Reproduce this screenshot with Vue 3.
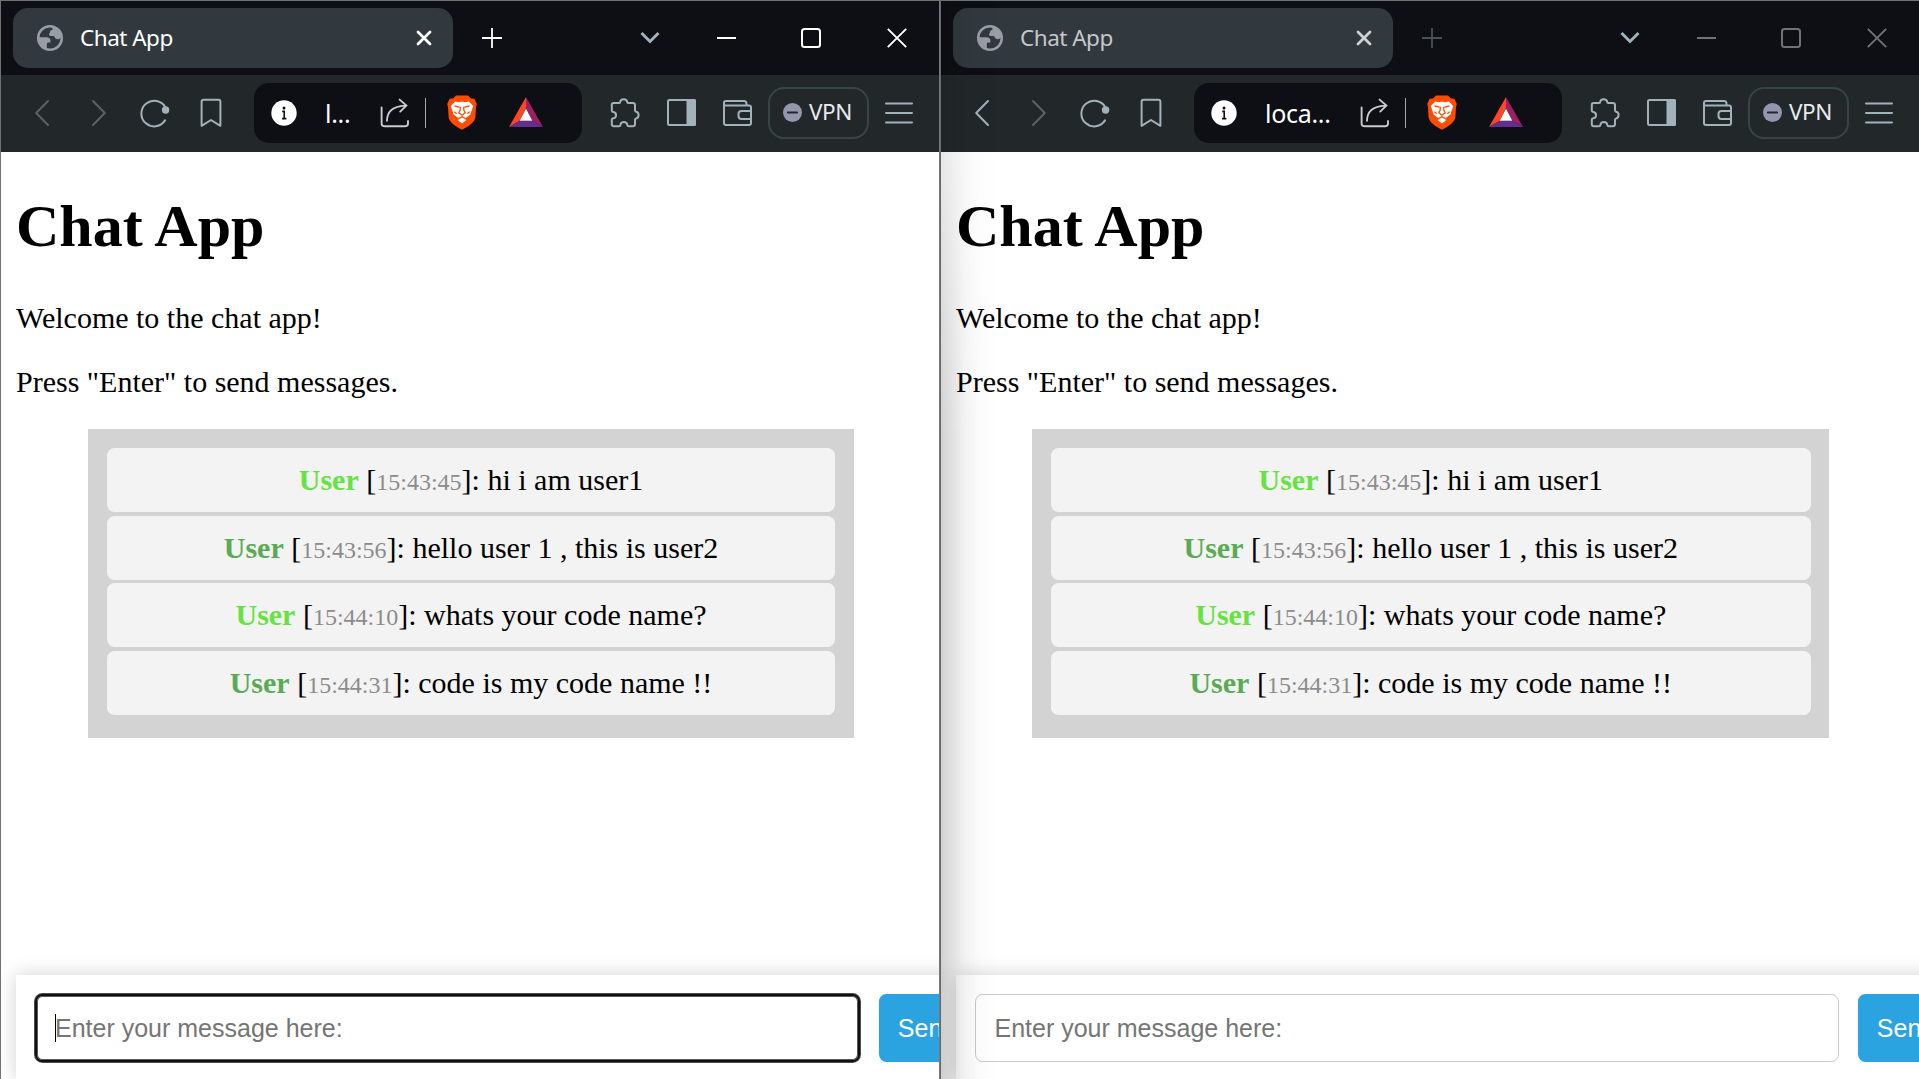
<script setup>
const messages = [
  { id: 1, tone: 'lime', time: '15:43:45', text: 'hi i am user1' },
  { id: 2, tone: 'moss', time: '15:43:56', text: 'hello user 1 , this is user2' },
  { id: 3, tone: 'lime', time: '15:44:10', text: 'whats your code name?' },
  { id: 4, tone: 'moss', time: '15:44:31', text: 'code is my code name !!' },
]
const windows = [
  { id: 'first', active: true, url: 'l...' },
  { id: 'second', active: false, url: 'loca...' },
]
</script>

<template>
  <main class="desktop">
    <section v-for="w in windows" :key="w.id" class="window" :class="[w.id, { inactive: !w.active }]">
      <header class="tabstrip">
        <div class="tab">
          <svg class="globe" width="28" height="28" viewBox="0 0 28 28">
            <circle cx="14" cy="14" r="11.8" fill="none" stroke="#9a9ca7" stroke-width="2.5" />
            <path fill="#9a9ca7" d="M14 8.6C14 6.8 14.6 6 16.4 6V3L22 4.5 25.6 10 25 13.4C23.4 15.2 21.6 15.6 19.6 14.6 18.6 14 19 12 17 12H14.2C12.8 12 12.6 9.6 14 8.6Z" />
            <path fill="#9a9ca7" d="M2 13.2H10.4C12.6 13.2 14.4 14.4 14.4 16.4V18.6H12.2C11 18.6 10.8 19.6 10.8 21V24.6L6 23Z" />
          </svg>
          <span class="title">Chat App</span>
          <svg class="tabclose" width="16" height="16" viewBox="0 0 16 16"><path d="M2 2 14 14M14 2 2 14" /></svg>
        </div>
        <svg class="plus" width="20" height="20" viewBox="0 0 20 20"><path d="M10 0V20M0 10H20" /></svg>
        <div class="controls">
          <svg class="chev" width="20" height="14" viewBox="0 0 20 14"><path d="M1.5 2 10 10.5 18.5 2" /></svg>
          <svg class="ctl min" width="19" height="20" viewBox="0 0 19 20"><path d="M0 10H19" /></svg>
          <svg class="ctl max" width="20" height="20" viewBox="0 0 20 20"><rect x="1" y="1" width="18" height="18" rx="2.5" /></svg>
          <svg class="ctl cls" width="20" height="20" viewBox="0 0 20 20"><path d="M.8.8 19.2 19.2M19.2.8.8 19.2" /></svg>
        </div>
      </header>

      <nav class="toolbar">
        <svg class="line back" width="16" height="28" viewBox="0 0 16 28"><path d="M14 2 2.2 14 14 26" /></svg>
        <svg class="line fwd" width="16" height="28" viewBox="0 0 16 28"><path d="M2 2 13.8 14 2 26" /></svg>
        <svg class="line reload" width="30" height="30" viewBox="0 0 30 30">
          <path d="M25.4 9.4A12.8 12.8 0 1 0 25 22.4" />
          <circle cx="25.6" cy="12" r="3.7" class="solid" />
        </svg>
        <svg class="line mark" width="22" height="30" viewBox="0 0 22 30"><path d="M3.6 1.8H18.4Q20.4 1.8 20.4 3.8V27.8L11 22 1.6 27.8V3.8Q1.6 1.8 3.6 1.8Z" /></svg>

        <div class="urlbar">
          <svg class="info" width="26" height="26" viewBox="0 0 26 26">
            <circle cx="13" cy="13" r="12.7" fill="#fff" />
            <circle cx="13" cy="7.9" r="1.5" fill="#0e0f14" />
            <path d="M11.2 11.4H13.2V18.4M11 18.6H15.4" fill="none" stroke="#0e0f14" stroke-width="1.6" />
          </svg>
          <span class="url">{{ w.url }}</span>
          <svg class="share" width="30" height="30" viewBox="0 0 30 30">
            <path d="M1.6 9.5V25.6Q1.6 28.2 4.2 28.2H25.4Q28 28.2 28 25.6V23M7 22.8C7 13.6 12 8.4 25 7.6M19.6 1.6 26.4 7.6 20.2 13.6" />
          </svg>
          <i class="sep"></i>
          <svg class="brave" width="30" height="35" viewBox="0 0 30 35">
            <path fill="#ff4c00" d="M9 .4H21L24 3.6 27.4 3.8 29.8 9 29 12 28.4 22C27.4 27.4 23 30.6 15 34.8 7 30.6 2.6 27.4 1.6 22L1 12 .2 9 2.6 3.8 6 3.6Z" />
            <path fill="#fff" d="M8.2 6.4 12 7.2 15 6.6 18 7.2 21.8 6.4 26.2 11 24.4 16.2 23.4 19.6 18.8 23 15 20.9 11.2 23 6.6 19.6 5.6 16.2 3.8 11Z" />
            <path fill="#fff" d="M15 22.6 19.4 25 15 28.4 10.6 25Z" />
            <path fill="none" stroke="#ff4c00" stroke-width="1.3" d="M7.6 11 12.4 12.2M22.4 11 17.6 12.2M13.2 11.8V15L11.8 17.8 15 20.2 18.2 17.8 16.8 15V11.8M7.4 16.6 9.6 18.8M22.6 16.6 20.4 18.8" />
          </svg>
          <svg class="bat" width="34" height="31" viewBox="0 0 34 31">
            <path fill="#ff4724" d="M17 0V11L10.5 24 0 30Z" />
            <path fill="#9e1f63" d="M17 0 34 30 23.5 24 17 11Z" />
            <path fill="#662d91" d="M0 30 10.5 24H23.5L34 30Z" />
            <path fill="#fff" d="M17 11.5 23.3 23.8H10.7Z" />
          </svg>
        </div>

        <svg class="line puzzle" width="30" height="30" viewBox="0 0 30 30">
          <path d="M3.5 5H9.2C10 5 10.2 4.6 10.2 3.9 10.6.4 16.8.4 17.2 3.9 17.2 4.6 17.5 5 18.2 5H22.8Q25 5 25 7.2V12.2C25 13.3 25.5 13.6 26.2 13.7 29.4 14.5 29.4 19.7 26.2 20.5 25.5 20.6 25 21 25 22V26Q25 28.2 22.8 28.2H18.8C17.6 28.2 17.4 27.6 17.3 26.8 16.7 23 11 23 10.4 26.8 10.3 27.6 10 28.2 9 28.2H4Q1.8 28.2 1.8 26V21.5C1.8 20.6 2.4 20.4 3.2 20.3 7 19.8 7 14.6 3.2 14 2.2 13.9 1.8 13.6 1.8 12.6V6.7Q1.8 5 3.5 5Z" />
        </svg>
        <svg class="line panel" width="29" height="27" viewBox="0 0 29 27">
          <rect x="1" y="1" width="27" height="25" rx="1.5" /><path class="solid" d="M19.5 0H27.5Q29 0 29 1.5V25.5Q29 27 27.5 27H19.5Z" />
        </svg>
        <svg class="line wallet" width="29" height="26" viewBox="0 0 29 26">
          <path d="M1 5.5H26Q28 5.5 28 7.5V23Q28 25 26 25H3Q1 25 1 23V3Q1 1 3 1H21Q23.5 1 23.5 3.5V5M28 11H18.500Q15.5 11 15.5 14V16Q15.5 19 18.5 19H28" />
        </svg>
        <div class="vpn">
          <svg width="19" height="19" viewBox="0 0 19 19"><circle cx="9.5" cy="9.5" r="9.5" fill="#9496ae" /><path d="M5 9.5H14" stroke="#22272a" stroke-width="2.2" stroke-linecap="round" /></svg>
          <span>VPN</span>
        </div>
        <svg class="line menu" width="28" height="22" viewBox="0 0 28 22"><path d="M1 1.5H27M1 11H27M1 20.5H27" /></svg>
      </nav>

      <div class="viewport">
        <div class="page">
          <h1>Chat App</h1>
          <p>Welcome to the chat app!</p>
          <p>Press "Enter" to send messages.</p>
          <div class="chat">
            <div v-for="m in messages" :key="m.id" class="message">
              <b :class="m.tone">User</b> [<span class="time">{{ m.time }}</span>]: {{ m.text }}
            </div>
          </div>
          <form class="composer" @submit.prevent>
            <div class="field">
              <input type="text" placeholder="Enter your message here:" />
              <i v-if="w.active" class="caret"></i>
            </div>
            <button type="submit">Send</button>
          </form>
        </div>
      </div>
      <div v-if="!w.active" class="edge-shade"></div>
    </section>
  </main>
</template>

<style>
html, body { margin: 0; overflow: hidden; background: #fff; }
</style>

<style scoped>
* { box-sizing: border-box; }
svg { display: block; flex: none; }
.desktop { display: grid; grid-template-columns: 940px 979px; width: 1919px; height: 1079px; overflow: hidden; }
.window { position: relative; display: flex; flex-direction: column; min-width: 0; height: 1079px; overflow: hidden; border-top: 1px solid #6f7271; border-left: 1px solid #6f7271; background: #fff; }
.first { border-right: 1px solid #76797a; }
.second { border-left-color: #66696a; }

.tabstrip { display: flex; align-items: center; flex: none; height: 74px; padding: 0 32px 0 12px; background: #0e0f14; }
.tab { display: flex; align-items: center; width: 440px; height: 60px; padding: 0 21px 0 23px; border-radius: 15px; background: #31393e; }
.title { margin-left: 16px; padding-bottom: 1px; color: #fff; font: 22.5px/30px "Noto Sans", "Open Sans", sans-serif; letter-spacing: -0.5px; white-space: nowrap; }
.tabclose { margin-left: auto; fill: none; stroke: #fff; stroke-width: 2.8; stroke-linecap: round; }
.plus { margin-left: 29px; stroke: #fff; stroke-width: 1.8; }
.controls { display: flex; align-items: center; margin-left: auto; }
.chev { margin-right: 57px; fill: none; stroke: #9fb1b9; stroke-width: 3; }
.ctl { fill: none; stroke: #fff; stroke-width: 2; }
.min { margin-right: 65px; }
.max { margin-right: 66px; }
.cls { stroke-width: 1.9; }
.inactive .title { color: #c6c7c9; }
.inactive .tabclose { stroke: #cfd1d2; }
.inactive .plus { stroke: #4a5257; }
.inactive .ctl { stroke: #717275; }

.toolbar { display: flex; align-items: center; flex: none; height: 77px; padding: 0 26px 2px 33px; background: #22272a; }
.line { fill: none; stroke: #a2b2ba; stroke-width: 2; stroke-linecap: round; stroke-linejoin: round; }
.solid { fill: #a2b2ba; stroke: none; }
.first .back, .fwd { stroke: #5b6267; }
.fwd { margin-left: 41px; }
.reload { margin-left: 33px; }
.mark { margin-left: 30px; }
.urlbar { display: flex; align-items: center; flex: 1; min-width: 0; height: 60px; margin-left: 32px; padding: 0 39px 0 17px; border-radius: 15px; background: #0e0f14; }
.url { margin-left: 28px; color: #fff; font: 25px/34px "Noto Sans", "Open Sans", sans-serif; letter-spacing: -0.3px; white-space: nowrap; }
.share { margin-left: auto; fill: none; stroke: #c9cacc; stroke-width: 1.9; stroke-linecap: round; }
.sep { width: 1px; height: 30px; margin-left: 15px; background: #a5a7aa; }
.brave { margin-left: 21px; }
.bat { margin-left: 32px; }
.puzzle { margin-left: 28px; }
.panel { margin-left: 27px; }
.wallet { margin-left: 27px; }
.vpn { display: flex; align-items: center; width: 101px; height: 52px; margin-left: 16px; padding-left: 13px; border: 2px solid #394447; border-radius: 16px; color: #e9ebee; font: 22.5px/30px "Noto Sans", "Open Sans", sans-serif; letter-spacing: -0.4px; }
.vpn span { margin-left: 7px; padding-bottom: 1px; }
.menu { margin-left: 16px; }

.viewport { flex: 1; min-height: 0; overflow: hidden; }
.page { display: flex; flex-direction: column; width: 940px; height: 100%; padding: 0 15px; color: #000; font: 30px/34px "Liberation Serif", "Times New Roman", serif; }
.second .page { width: 979.5px; }
h1 { margin: 40.2px 0 40px; font-size: 60px; line-height: 69px; font-weight: 700; }
p { margin: 0 0 30px; }
.chat { width: calc(80% + 37.5px); margin: 0 auto; padding: 18.75px; background: #d3d3d3; text-align: center; }
.message { margin-bottom: 3.75px; padding: 15px; border-radius: 7.5px; background: #f3f3f3; white-space: nowrap; }
.lime { color: #66e342; }
.moss { color: #5bab56; }
.time { color: #8c8c8c; font-size: 24px; line-height: 1; }
.composer { display: flex; gap: 19px; flex: none; height: 104px; margin: auto -40px 0 0; padding: 19px 0 0 19px; background: #fff; box-shadow: 0 0 19px rgba(0, 0, 0, 0.18); }
.field { position: relative; flex: none; width: 825px; height: 68px; }
.second .field { width: 864px; }
input { width: 100%; height: 68px; margin: 0; padding: 0 18.5px; border: 1px solid #c8c8c8; border-radius: 7.5px; outline: none; background: #fff; font: 25px "Liberation Sans", Arial, sans-serif; }
input::placeholder { color: #757575; opacity: 1; }
.first input { padding: 0 18px; border: 2px solid #101010; box-shadow: 0 0 0 1px #4d4d4d, inset 0 0 0 1px #5a5a5a; }
.caret { position: absolute; left: 20px; top: 20px; width: 1px; height: 28px; background: #000; }
button { flex: none; width: 96px; height: 68px; padding: 0; border: 0; border-radius: 7.5px; background: #2aa3e0; color: #fff; font: 25px "Liberation Sans", Arial, sans-serif; }
.edge-shade { position: absolute; left: 0; top: 0; bottom: 0; width: 60px; pointer-events: none; background: linear-gradient(to right, rgba(0, 0, 0, 0.18), rgba(0, 0, 0, 0.12) 11px, rgba(0, 0, 0, 0.05) 24px, rgba(0, 0, 0, 0.015) 38px, transparent 55px); -webkit-mask-image: linear-gradient(rgba(0, 0, 0, 0.5) 150px, #000 440px); mask-image: linear-gradient(rgba(0, 0, 0, 0.5) 150px, #000 440px); }
</style>
